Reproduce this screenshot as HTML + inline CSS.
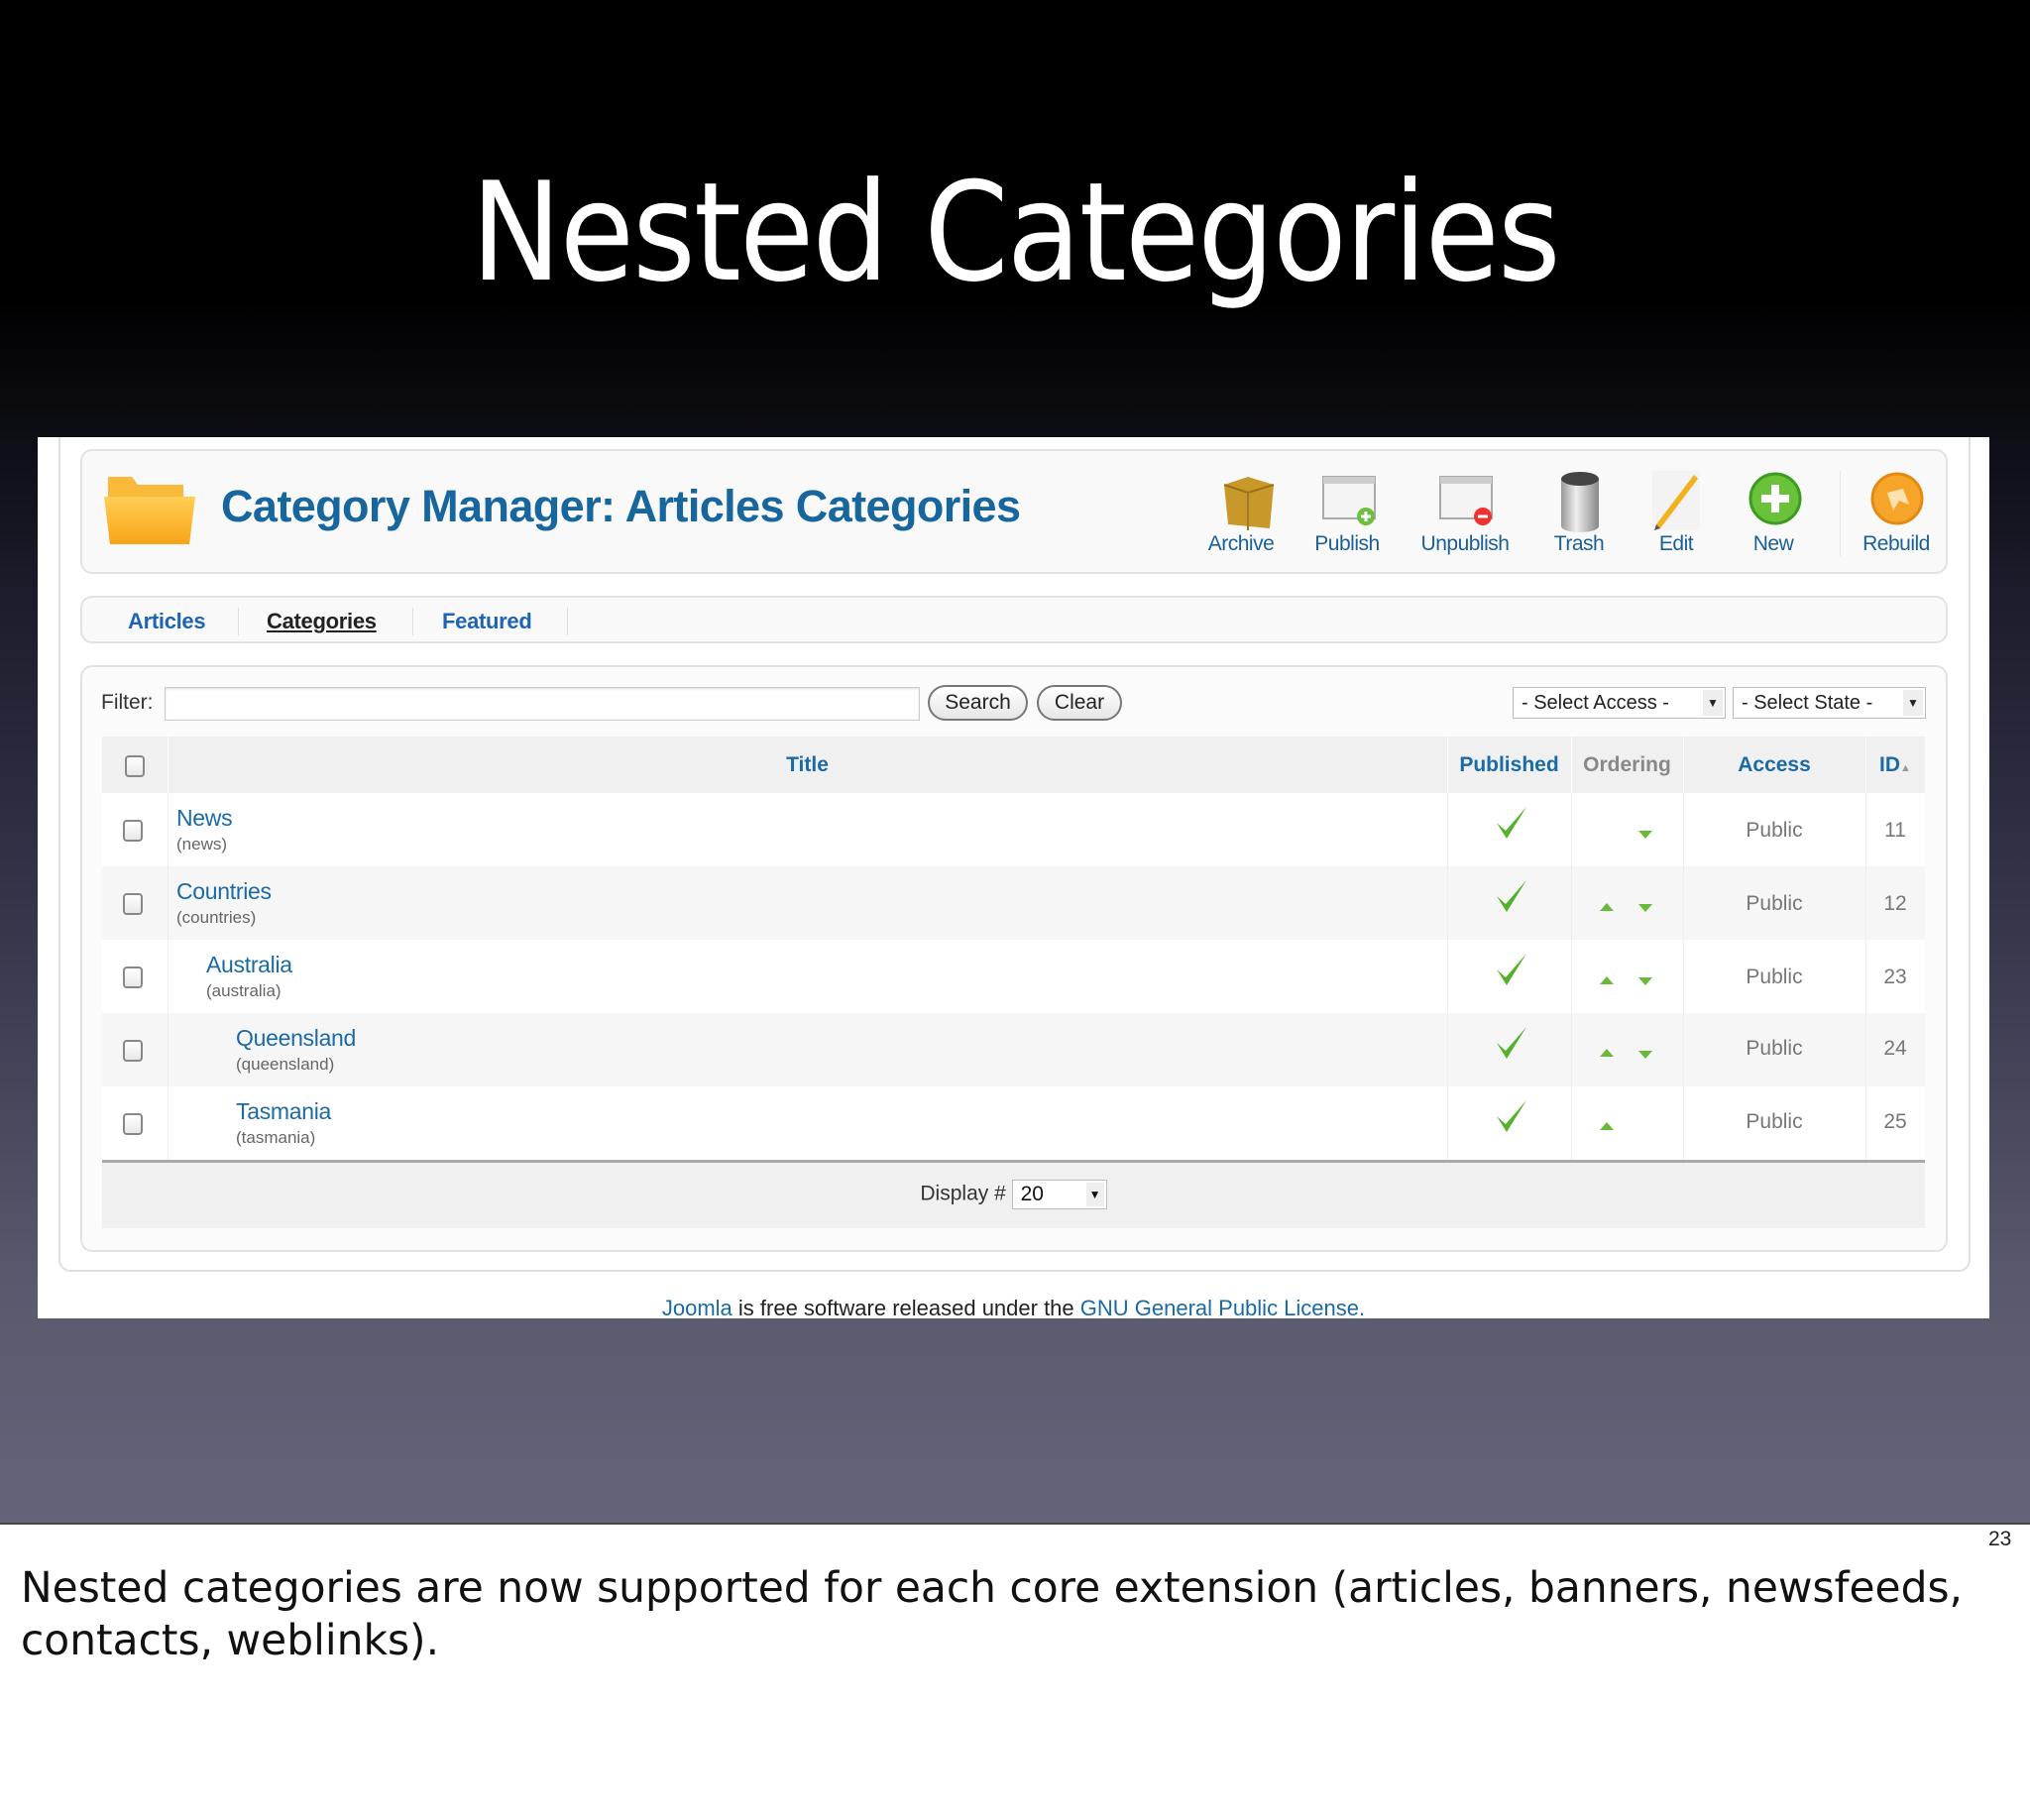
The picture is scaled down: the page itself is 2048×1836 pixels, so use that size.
<!DOCTYPE html>
<html><head><meta charset="utf-8"><style>
*{margin:0;padding:0;box-sizing:border-box}
body{width:2048px;height:1836px;background:#fff;position:relative;overflow:hidden;font-family:"Liberation Sans",Arial,sans-serif}
.abs{position:absolute}
#slide{left:0;top:0;width:2048px;height:1538px;background:linear-gradient(#000 0px,#000 300px,#1c1c2c 600px,#3c3c52 1000px,#5a5a6e 1300px,#63637a 1538px);border-bottom:2px solid #444}
#title{left:0;width:2048px;top:150px;text-align:center;color:#fff;font-size:138px;font-family:"DejaVu Sans","Liberation Sans",sans-serif;letter-spacing:-2px;line-height:170px;transform:scaleX(0.885)}
#shot{left:38px;top:441px;width:1969px;height:889px;background:#fff;overflow:hidden}
.panel{position:absolute;background:#f9f9f9;border:2px solid #e2e2e2;border-radius:12px}
.lbl{position:absolute;font-size:21px;color:#1b5f97;text-align:center;width:120px;margin-left:-60px;top:82px;letter-spacing:-0.5px}
.tab{position:absolute;top:11px;font-size:22px;font-weight:bold;color:#1e64b0;letter-spacing:-0.3px}
.sep{position:absolute;top:10px;width:1px;height:28px;background:#ddd}
.cb{position:absolute;width:20px;height:22px;border:2px solid #888;border-radius:4px;background:linear-gradient(#fff,#e8e8e8)}
.name{position:absolute;top:12px;font-size:23px;color:#1a6aa6;letter-spacing:-0.3px}
.alias{position:absolute;top:42px;font-size:17px;color:#666}
.pub{position:absolute;font-size:21px;color:#777}
.hd{position:absolute;top:17px;font-size:21px;font-weight:bold;color:#1a6aa6}
.vl{position:absolute;top:0;width:1px;height:74px;background:#eee}
</style></head><body>
<div id="slide" class="abs"></div>
<div id="title" class="abs">Nested Categories</div>

<div id="shot" class="abs">
  <div class="abs" style="left:21px;top:-10px;width:1929px;height:852px;border:2px solid #e0e0e0;border-radius:12px"></div>
  <div class="panel" style="left:43px;top:12px;width:1884px;height:126px">
    <svg class="abs" style="left:20px;top:22px" width="96" height="76" viewBox="0 0 96 76">
      <defs><linearGradient id="fg" x1="0" y1="0" x2="0" y2="1"><stop offset="0" stop-color="#ffcf55"/><stop offset="1" stop-color="#f7a418"/></linearGradient></defs>
      <path d="M6 4 h24 l6 8 h46 v14 h-76z" fill="#f9b93a"/>
      <path d="M2 24 h92 l-6 48 h-80z" fill="url(#fg)"/>
    </svg>
    <div class="abs" style="left:140px;top:30px;font-size:45px;font-weight:bold;color:#17669e;letter-spacing:-0.6px;white-space:nowrap">Category Manager: Articles Categories</div>
    <svg class="abs" style="left:1146px;top:22px" width="60" height="60" viewBox="0 0 60 60"><path d="M6 12 L30 4 L56 12 L52 56 L10 52z" fill="#c9982a"/><path d="M6 12 L30 20 L56 12" fill="none" stroke="#9a7015" stroke-width="2"/><path d="M30 20 V58" stroke="#a07a1e" stroke-width="2"/></svg>
    <div class="lbl" style="left:1169px">Archive</div>
    <svg class="abs" style="left:1248px;top:22px" width="60" height="60" viewBox="0 0 60 60"><rect x="4" y="4" width="52" height="42" fill="#f4f4f4" stroke="#aaa" stroke-width="2"/><rect x="4" y="4" width="52" height="7" fill="#ccc"/><circle cx="47" cy="44" r="9" fill="#6cc040"/><path d="M47 39v10M42 44h10" stroke="#fff" stroke-width="3"/></svg>
    <div class="lbl" style="left:1276px">Publish</div>
    <svg class="abs" style="left:1366px;top:22px" width="60" height="60" viewBox="0 0 60 60"><rect x="4" y="4" width="52" height="42" fill="#f4f4f4" stroke="#aaa" stroke-width="2"/><rect x="4" y="4" width="52" height="7" fill="#ccc"/><circle cx="47" cy="44" r="9" fill="#e33"/><path d="M42 44h10" stroke="#fff" stroke-width="3"/></svg>
    <div class="lbl" style="left:1395px">Unpublish</div>
    <svg class="abs" style="left:1488px;top:18px" width="46" height="66" viewBox="0 0 46 66"><defs><linearGradient id="tg"><stop offset="0" stop-color="#999"/><stop offset=".4" stop-color="#eee"/><stop offset="1" stop-color="#888"/></linearGradient></defs><path d="M4 10 V58 a19 6 0 0 0 38 0 V10z" fill="url(#tg)"/><ellipse cx="23" cy="10" rx="19" ry="7" fill="#444"/></svg>
    <div class="lbl" style="left:1510px">Trash</div>
    <svg class="abs" style="left:1580px;top:18px" width="56" height="66" viewBox="0 0 56 66"><rect x="4" y="2" width="48" height="60" fill="#f3f3f3"/><path d="M8 56 L46 6 L50 10 L12 60z" fill="#f2b21f"/><path d="M8 56 L12 60 L6 62z" fill="#555"/></svg>
    <div class="lbl" style="left:1608px">Edit</div>
    <svg class="abs" style="left:1680px;top:20px" width="56" height="56" viewBox="0 0 56 56"><circle cx="28" cy="28" r="25" fill="#6ac13a" stroke="#3e9b22" stroke-width="3"/><path d="M28 14v28M14 28h28" stroke="#fff" stroke-width="8"/></svg>
    <div class="lbl" style="left:1706px">New</div>
    <div class="abs" style="left:1773px;top:20px;width:1px;height:86px;background:#e6e6e6"></div>
    <svg class="abs" style="left:1803px;top:20px" width="56" height="56" viewBox="0 0 56 56"><circle cx="28" cy="28" r="25" fill="#f7a52a" stroke="#e38a10" stroke-width="3"/><path d="M18 22 L34 18 L40 34 L30 30 L24 40z" fill="#fde2b0"/></svg>
    <div class="lbl" style="left:1830px">Rebuild</div>
  </div>
  <div class="panel" style="left:43px;top:160px;width:1884px;height:48px">
    <div class="tab" style="left:46px">Articles</div>
    <div class="sep" style="left:157px"></div>
    <div class="tab" style="left:186px;color:#222;text-decoration:underline">Categories</div>
    <div class="sep" style="left:333px"></div>
    <div class="tab" style="left:363px">Featured</div>
    <div class="sep" style="left:489px"></div>
  </div>
  <div class="panel" style="left:43px;top:230px;width:1884px;height:592px;background:#fbfbfb">
    <div class="abs" style="left:19px;top:24px;font-size:21px;color:#333">Filter:</div>
    <div class="abs" style="left:83px;top:20px;width:762px;height:34px;background:#fff;border:1px solid #ccc;box-shadow:inset 0 1px 2px #ddd"></div>
    <div class="abs" style="left:853px;top:18px;width:101px;height:36px;border:2px solid #777;border-radius:18px;background:linear-gradient(#fff,#e6e6e6);font-size:21px;text-align:center;line-height:32px;color:#222">Search</div>
    <div class="abs" style="left:963px;top:18px;width:86px;height:36px;border:2px solid #777;border-radius:18px;background:linear-gradient(#fff,#e6e6e6);font-size:21px;text-align:center;line-height:32px;color:#222">Clear</div>
    <div class="abs" style="left:1443px;top:20px;width:215px;height:32px;border:1px solid #bbb;background:#fff;font-size:20px;line-height:30px;padding-left:8px;color:#222">- Select Access -<span style="position:absolute;right:2px;top:2px;width:20px;height:26px;background:#eee;font-size:12px;text-align:center;line-height:26px">▼</span></div>
    <div class="abs" style="left:1665px;top:20px;width:195px;height:32px;border:1px solid #bbb;background:#fff;font-size:20px;line-height:30px;padding-left:8px;color:#222">- Select State -<span style="position:absolute;right:2px;top:2px;width:20px;height:26px;background:#eee;font-size:12px;text-align:center;line-height:26px">▼</span></div>
    <div class="abs" style="left:20px;top:70px;width:1839px;height:60px;background:#f0f0f0;border-bottom:3px solid #aaa">
      <div class="cb" style="left:23px;top:19px"></div>
      <div class="vl" style="left:66px;height:60px;background:#fff"></div>
      <div class="hd" style="width:1291px;text-align:center;left:66px">Title</div>
      <div class="vl" style="left:1357px;height:60px;background:#fff"></div>
      <div class="hd" style="left:1357px;width:125px;text-align:center">Published</div>
      <div class="vl" style="left:1482px;height:60px;background:#fff"></div>
      <div class="hd" style="left:1482px;width:113px;text-align:center;color:#888">Ordering</div>
      <div class="vl" style="left:1595px;height:60px;background:#fff"></div>
      <div class="hd" style="left:1595px;width:184px;text-align:center">Access</div>
      <div class="vl" style="left:1779px;height:60px;background:#fff"></div>
      <div class="hd" style="left:1779px;width:60px;text-align:center">ID<span style="font-size:11px;color:#999">▲</span></div>
    </div>
  </div>
</div>

<div class="abs" style="left:103px;top:800px;width:1839px">
  <div class="abs" style="left:0;top:0;width:1839px;height:74px;background:#fff"></div>
  <div class="abs" style="left:0;top:74px;width:1839px;height:74px;background:#f6f6f6"></div>
  <div class="abs" style="left:0;top:148px;width:1839px;height:74px;background:#fff"></div>
  <div class="abs" style="left:0;top:222px;width:1839px;height:74px;background:#f6f6f6"></div>
  <div class="abs" style="left:0;top:296px;width:1839px;height:74px;background:#fff"></div>
  <div class="vl" style="left:66px;height:370px"></div>
  <div class="vl" style="left:1357px;height:370px"></div>
  <div class="vl" style="left:1482px;height:370px"></div>
  <div class="vl" style="left:1595px;height:370px"></div>
  <div class="vl" style="left:1779px;height:370px"></div>
  <div class="abs" style="left:0;top:370px;width:1839px;height:3px;background:#aaa"></div>
  <div class="abs" style="left:0;top:373px;width:1839px;height:66px;background:#f0f0f0"></div>
  <div class="abs" style="left:0;top:390px;width:1839px;text-align:center;font-size:21px;color:#333">Display # <span style="display:inline-block;width:96px;height:30px;border:1px solid #bbb;background:#fff;text-align:left;padding-left:8px;position:relative;vertical-align:middle;line-height:28px;color:#111">20<span style="position:absolute;right:2px;top:2px;width:18px;height:24px;background:#eee;font-size:12px;text-align:center;line-height:24px">▼</span></span></div>
</div>

<div class="abs" style="left:103px;top:800px;width:1839px;height:370px">
  <div class="cb" style="left:21px;top:27px"></div>
  <div class="name" style="left:75px">News</div><div class="alias" style="left:75px">(news)</div>
  <div class="pub" style="left:1779px;width:60px;text-align:center;top:26px">11</div>
  <div class="pub" style="left:1595px;width:184px;text-align:center;top:26px">Public</div>
  <div class="cb" style="left:21px;top:101px"></div>
  <div class="name" style="left:75px;top:86px">Countries</div><div class="alias" style="left:75px;top:116px">(countries)</div>
  <div class="pub" style="left:1779px;width:60px;text-align:center;top:100px">12</div>
  <div class="pub" style="left:1595px;width:184px;text-align:center;top:100px">Public</div>
  <div class="cb" style="left:21px;top:175px"></div>
  <div class="name" style="left:105px;top:160px">Australia</div><div class="alias" style="left:105px;top:190px">(australia)</div>
  <div class="pub" style="left:1779px;width:60px;text-align:center;top:174px">23</div>
  <div class="pub" style="left:1595px;width:184px;text-align:center;top:174px">Public</div>
  <div class="cb" style="left:21px;top:249px"></div>
  <div class="name" style="left:135px;top:234px">Queensland</div><div class="alias" style="left:135px;top:264px">(queensland)</div>
  <div class="pub" style="left:1779px;width:60px;text-align:center;top:246px">24</div>
  <div class="pub" style="left:1595px;width:184px;text-align:center;top:246px">Public</div>
  <div class="cb" style="left:21px;top:323px"></div>
  <div class="name" style="left:135px;top:308px">Tasmania</div><div class="alias" style="left:135px;top:338px">(tasmania)</div>
  <div class="pub" style="left:1779px;width:60px;text-align:center;top:320px">25</div>
  <div class="pub" style="left:1595px;width:184px;text-align:center;top:320px">Public</div>
  <svg class="abs" style="left:1404px;top:0" width="36" height="370" viewBox="0 0 36 370">
    <g fill="#55b02c">
      <path id="ck" d="M3 30 L12 38 L33 14 L13 46z"/>
      <use href="#ck" y="74"/><use href="#ck" y="148"/><use href="#ck" y="222"/><use href="#ck" y="296"/>
    </g>
  </svg>
  <svg class="abs" style="left:1482px;top:0" width="113" height="370" viewBox="0 0 113 370">
    <g fill="#6ab83c">
      <path d="M68 38 h14 l-7 8z"/>
      <path d="M29 119 h14 l-7 -8z"/><path d="M68 112 h14 l-7 8z"/>
      <path d="M29 193 h14 l-7 -8z"/><path d="M68 186 h14 l-7 8z"/>
      <path d="M29 266 h14 l-7 -8z"/><path d="M68 260 h14 l-7 8z"/>
      <path d="M29 340 h14 l-7 -8z"/>
    </g>
  </svg>
</div>

<div class="abs" style="left:38px;top:1307px;width:1969px;text-align:center;font-size:22px;color:#222;height:23px;overflow:hidden"><span style="position:relative;left:0"><span style="color:#1a6aa6">Joomla</span> is free software released under the <span style="color:#1a6aa6">GNU General Public License.</span></span></div>

<div class="abs" style="left:2006px;top:1541px;font-size:21px;color:#222">23</div>
<div class="abs" style="left:21px;top:1576px;font-size:43px;line-height:53px;color:#111;font-family:'DejaVu Sans','Liberation Sans',sans-serif;width:2100px;transform:scaleX(0.985);transform-origin:left">Nested categories are now supported for each core extension (articles, banners, newsfeeds,<br>contacts, weblinks).</div>
</body></html>
